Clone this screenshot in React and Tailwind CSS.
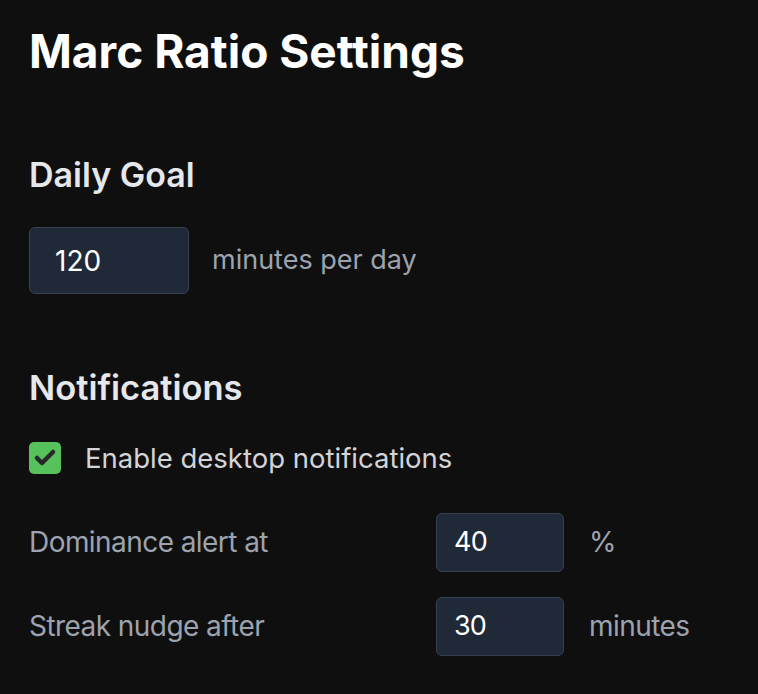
import { Check } from "lucide-react";

const NumberRow = ({ label, value, unit }) => (
  <div className="flex items-center">
    <span className="w-[407px] text-[28px] text-[#9ca3af] tracking-[-0.02em]">{label}</span>
    <div className="w-[128px] h-[59px] flex items-center pl-[17px] bg-[#1f2937] border border-[#374151] rounded-md text-[27px] text-white tracking-[-0.03em]">
      {value}
    </div>
    <span className="ml-[25px] text-[28px] text-[#9ca3af] tracking-[-0.02em]">{unit}</span>
  </div>
);

const App = () => {
  return (
    <div
      className="min-h-screen bg-[#0f0f0f] px-[29px] pt-[28px]"
      style={{ fontFamily: "Inter, 'Noto Sans', sans-serif" }}
    >
      <h1 className="text-[46px] leading-none font-bold text-white">Marc Ratio Settings</h1>

      {/* Daily goal */}
      <h2 className="mt-[84px] text-[34px] leading-none font-semibold text-[#e5e7eb]">Daily Goal</h2>
      <div className="mt-[35px] flex items-center">
        <div className="w-[160px] h-[67px] flex items-center pl-[25px] bg-[#1f2937] border border-[#374151] rounded-md text-[28px] text-white">
          120
        </div>
        <span className="ml-[23px] text-[27px] text-[#9ca3af]">minutes per day</span>
      </div>

      {/* Notifications */}
      <h2 className="mt-[77px] text-[34.5px] leading-none font-semibold text-[#e5e7eb]">Notifications</h2>
      <div className="mt-[32px] flex items-center">
        <div className="w-[32px] h-[32px] rounded-[5px] bg-[#57c15c] flex items-center justify-center">
          <Check size={24} strokeWidth={4.5} className="text-[#26282b]" />
        </div>
        <span className="ml-[24px] text-[27.5px] text-[#d4d4d8]">Enable desktop notifications</span>
      </div>

      <div className="mt-[34px] flex flex-col gap-[25px]">
        <NumberRow label="Dominance alert at" value="40" unit="%" />
        <NumberRow label="Streak nudge after" value="30" unit="minutes" />
      </div>
    </div>
  );
};

export default App;
